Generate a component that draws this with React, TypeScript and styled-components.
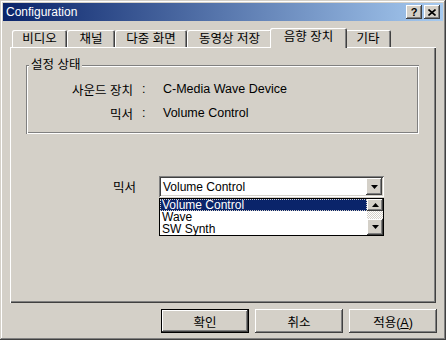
import styled, { createGlobalStyle } from "styled-components";

const face = "#d4d0c8";
const shadow = "#808080";
const dark = "#404040";

const GlobalStyle = createGlobalStyle`
  html, body {
    margin: 0;
    padding: 0;
    background: ${face};
  }
  body {
    font-family: "Liberation Sans", "Noto Sans CJK KR", sans-serif;
    font-size: 12.5px;
    color: #000;
  }
  * {
    box-sizing: border-box;
  }
`;

const raised = `inset -1px -1px ${dark}, inset 1px 1px #fff, inset -2px -2px ${shadow}, inset 2px 2px ${face}`;
const sunken = `inset 1px 1px ${shadow}, inset -1px -1px #fff, inset 2px 2px ${dark}, inset -2px -2px ${face}`;

const Window = styled.div`
  width: 446px;
  height: 340px;
  padding: 3px;
  display: flex;
  flex-direction: column;
  background: ${face};
  box-shadow: inset -1px -1px ${dark}, inset 1px 1px ${face},
    inset -2px -2px ${shadow}, inset 2px 2px #fff;
`;

const TitleBar = styled.div`
  height: 18px;
  display: flex;
  align-items: center;
  padding: 0 3px 0 3px;
  background: linear-gradient(to right, #0a246a, #a6caf0);
  color: #fff;
`;

const Title = styled.span`
  flex: 1;
  font-size: 12px;
  line-height: 18px;
`;

const CaptionButton = styled.div`
  width: 16px;
  height: 14px;
  display: flex;
  align-items: center;
  justify-content: center;
  background: ${face};
  box-shadow: ${raised};
  color: #000;
  font-weight: bold;
  font-size: 11px;
  line-height: 14px;

  & + & {
    margin-left: 2px;
  }
`;

const Body = styled.div`
  flex: 1;
  display: flex;
  flex-direction: column;
  padding: 7px 7px 0;
`;

const TabStrip = styled.div`
  height: 19px;
  display: flex;
  align-items: flex-end;
  padding-left: 2px;
  position: relative;
  z-index: 1;
`;

const Tab = styled.div<{ $active?: boolean; $w: number }>`
  width: ${(p) => p.$w + (p.$active ? 4 : 0)}px;
  height: ${(p) => (p.$active ? 20 : 17)}px;
  margin: 0 ${(p) => (p.$active ? -2 : 0)}px ${(p) => (p.$active ? -1 : 0)}px;
  padding-bottom: ${(p) => (p.$active ? 3 : 0)}px;
  position: relative;
  z-index: ${(p) => (p.$active ? 2 : 1)};
  display: flex;
  align-items: center;
  justify-content: center;
  background: ${face};
  border-radius: 2px 2px 0 0;
  box-shadow: inset 1px 1px #fff, inset -1px 0 ${dark}, inset -2px 0 ${shadow};
  line-height: 14px;
`;

const Panel = styled.div`
  height: 256px;
  display: flex;
  flex-direction: column;
  box-shadow: inset 1px 1px #fff, inset -1px -1px ${dark},
    inset -2px -2px ${shadow};
`;

const GroupBox = styled.div`
  position: relative;
  height: 69px;
  margin: 18px 17px 0 16px;
  padding-top: 12px;
  box-shadow: inset 1px 1px ${shadow}, inset -1px -1px #fff,
    inset 2px 2px #fff, inset -2px -2px ${shadow};
`;

const GroupLabel = styled.span`
  position: absolute;
  top: -7px;
  left: 3px;
  padding: 0 2px;
  background: ${face};
  line-height: 14px;
`;

const InfoGrid = styled.div`
  display: grid;
  grid-template-columns: 107px 30px auto;
  grid-auto-rows: 24px;
  align-items: center;
`;

const InfoLabel = styled.span`
  text-align: right;
`;

const Colon = styled.span`
  padding-left: 9px;
`;

const MixerRow = styled.div`
  display: flex;
  align-items: center;
  margin-top: 42px;
  padding-left: 103px;
  gap: 22px;
`;

const MixerLabel = styled.span`
  width: 24px;
  white-space: nowrap;
`;

const ComboBox = styled.div`
  position: relative;
  width: 225px;
  height: 21px;
  display: flex;
  align-items: center;
  padding: 2px;
  background: #fff;
  box-shadow: ${sunken};
`;

const ComboText = styled.span`
  flex: 1;
  padding-left: 2px;
  font-size: 12px;
`;

const ArrowButton = styled.div<{ $h?: number }>`
  width: 16px;
  height: ${(p) => p.$h ?? 17}px;
  display: flex;
  align-items: center;
  justify-content: center;
  background: ${face};
  box-shadow: ${raised};
`;

const DropList = styled.div`
  position: absolute;
  left: 0;
  top: 100%;
  margin-top: 1px;
  width: 225px;
  height: 38px;
  display: flex;
  background: #fff;
  border: 1px solid #000;
`;

const Items = styled.div`
  flex: 1;
`;

const Item = styled.div<{ $selected?: boolean }>`
  height: 12px;
  line-height: 12px;
  padding-left: 2px;
  font-size: 12px;
  background: ${(p) => (p.$selected ? "#0a246a" : "transparent")};
  color: ${(p) => (p.$selected ? "#fff" : "#000")};
  outline: ${(p) => (p.$selected ? "1px dotted #d4d0c8" : "none")};
  outline-offset: -1px;
`;

const ScrollBar = styled.div`
  width: 16px;
  display: flex;
  flex-direction: column;
`;

const Track = styled.div`
  flex: 1;
  background: repeating-conic-gradient(#fff 0 25%, ${face} 0 50%) 0 0 / 2px 2px;
`;

const Footer = styled.div`
  display: flex;
  justify-content: flex-end;
  gap: 6px;
  margin: 6px -1px 0 0;
`;

const Button = styled.div<{ $default?: boolean }>`
  width: 88px;
  height: 24px;
  display: flex;
  align-items: center;
  justify-content: center;
  background: ${face};
  box-shadow: ${(p) =>
    p.$default
      ? `inset 0 0 0 1px #000, inset -2px -2px ${dark}, inset 2px 2px #fff, inset -3px -3px ${shadow}`
      : raised};
`;

const Arrow = ({ up }: { up?: boolean }) => (
  <svg width="7" height="4" viewBox="0 0 7 4">
    <polygon points={up ? "3.5,0 7,4 0,4" : "0,0 7,0 3.5,4"} fill="#000" />
  </svg>
);

const tabs = [
  { label: "비디오", w: 55 },
  { label: "채널", w: 48 },
  { label: "다중 화면", w: 72 },
  { label: "동영상 저장", w: 85 },
  { label: "음향 장치", w: 73, active: true },
  { label: "기타", w: 46 },
];

export default function App() {
  return (
    <>
      <GlobalStyle />
      <Window>
        <TitleBar>
          <Title>Configuration</Title>
          <CaptionButton>?</CaptionButton>
          <CaptionButton>
            <svg width="8" height="7" viewBox="0 0 8 7">
              <path d="M0.5 0.5 L7.5 6.5 M7.5 0.5 L0.5 6.5" stroke="#000" strokeWidth="1.6" />
            </svg>
          </CaptionButton>
        </TitleBar>
        <Body>
          <TabStrip>
            {tabs.map((t) => (
              <Tab key={t.label} $w={t.w} $active={t.active}>
                {t.label}
              </Tab>
            ))}
          </TabStrip>
          <Panel>
            <GroupBox>
              <GroupLabel>설정 상태</GroupLabel>
              <InfoGrid>
                <InfoLabel>사운드 장치</InfoLabel>
                <Colon>:</Colon>
                <span>C-Media Wave Device</span>
                <InfoLabel>믹서</InfoLabel>
                <Colon>:</Colon>
                <span>Volume Control</span>
              </InfoGrid>
            </GroupBox>
            <MixerRow>
              <MixerLabel>믹서</MixerLabel>
              <ComboBox>
                <ComboText>Volume Control</ComboText>
                <ArrowButton>
                  <Arrow />
                </ArrowButton>
                <DropList>
                  <Items>
                    <Item $selected>Volume Control</Item>
                    <Item>Wave</Item>
                    <Item>SW Synth</Item>
                  </Items>
                  <ScrollBar>
                    <ArrowButton $h={12}>
                      <Arrow up />
                    </ArrowButton>
                    <Track />
                    <ArrowButton $h={16}>
                      <Arrow />
                    </ArrowButton>
                  </ScrollBar>
                </DropList>
              </ComboBox>
            </MixerRow>
          </Panel>
          <Footer>
            <Button $default>확인</Button>
            <Button>취소</Button>
            <Button>
              <span>
                적용(<u>A</u>)
              </span>
            </Button>
          </Footer>
        </Body>
      </Window>
    </>
  );
}
